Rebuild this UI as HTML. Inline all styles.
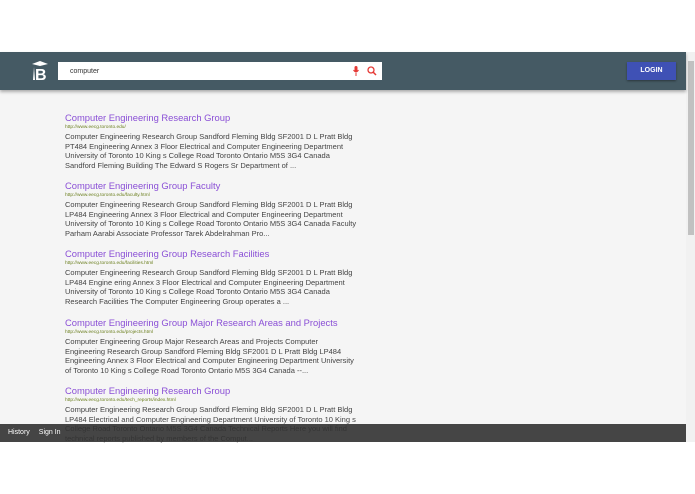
<!DOCTYPE html>
<html><head><style>
*{margin:0;padding:0;box-sizing:border-box}
body{width:695px;height:494px;background:#fff;position:relative;overflow:hidden;font-family:"Liberation Sans",Arial,sans-serif}
.hdr{position:absolute;left:0;top:52px;width:686px;height:38px;background:#455a64;box-shadow:0 2px 3px rgba(0,0,0,.3);z-index:2}
.main{position:absolute;left:0;top:90px;width:686px;height:352px;background:#f5f5f5}
.sb{position:absolute;left:686px;top:52px;width:9px;height:390px;background:#f1f1f1}
.thumb{position:absolute;left:688px;top:61px;width:6px;height:174px;background:#c1c1c1}
.search{position:absolute;left:58px;top:62px;width:324px;height:18px;background:#fff;font-size:7px;color:#333;padding:6px 0 0 12px;z-index:3}
.login{position:absolute;left:627px;top:62px;width:49px;height:18px;background:#3f51b5;color:#fff;font-size:7px;font-weight:bold;text-align:center;line-height:18px;box-shadow:0 1px 2px rgba(0,0,0,.4);z-index:3}
.res{position:absolute;left:65px;width:300px}
.t{color:#8a4fd6;font-size:9.4px;line-height:12px;white-space:nowrap}
.u{color:#6b7f1e;font-size:4.8px;line-height:8px;white-space:nowrap}
.s{color:#444;font-size:7.5px;line-height:9.5px;width:292px}
.bot{position:absolute;left:0;top:424px;width:686px;height:18px;background:rgba(50,50,50,.9);color:#fff;font-size:7px;line-height:18px;padding-left:8px}
.bot span{margin-right:9px}
</style></head><body>
<div class="main"></div>
<div class="hdr">
<svg style="position:absolute;left:31px;top:8px" width="18" height="22" viewBox="0 0 18 22"><path d="M1 4 L9 1 L17 4 L9 6 Z" fill="#fff"/><text x="4" y="20" font-family="Liberation Sans" font-weight="bold" font-size="16" fill="#fff">B</text><path d="M3 7 L4 20 L2 20 Z" fill="#fff"/></svg>
</div>
<div class="search">computer
<svg style="position:absolute;left:295px;top:4px" width="6" height="10" viewBox="0 0 6 10"><rect x="1.5" y="0" width="3" height="6" rx="1.5" fill="#e53935"/><path d="M0.5 4 Q3 8 5.5 4 M3 7 V10" stroke="#e53935" fill="none"/></svg>
<svg style="position:absolute;left:309px;top:4px" width="10" height="10" viewBox="0 0 10 10"><circle cx="4" cy="4" r="3" stroke="#e53935" stroke-width="1.3" fill="none"/><path d="M6 6 L9 9" stroke="#e53935" stroke-width="1.5"/></svg>
</div>
<div class="login">LOGIN</div>
<div class="res" style="top:112px"><div class="t">Computer Engineering Research Group</div><div class="u">http://www.eecg.toronto.edu/</div><div class="s">Computer Engineering Research Group Sandford Fleming Bldg SF2001 D L Pratt Bldg PT484 Engineering Annex 3 Floor Electrical and Computer Engineering Department University of Toronto 10 King s College Road Toronto Ontario M5S 3G4 Canada Sandford Fleming Building The Edward S Rogers Sr Department of ...</div></div>
<div class="res" style="top:180px"><div class="t">Computer Engineering Group Faculty</div><div class="u">http://www.eecg.toronto.edu/faculty.html</div><div class="s">Computer Engineering Research Group Sandford Fleming Bldg SF2001 D L Pratt Bldg LP484 Engineering Annex 3 Floor Electrical and Computer Engineering Department University of Toronto 10 King s College Road Toronto Ontario M5S 3G4 Canada Faculty Parham Aarabi Associate Professor Tarek Abdelrahman Pro...</div></div>
<div class="res" style="top:248px"><div class="t">Computer Engineering Group Research Facilities</div><div class="u">http://www.eecg.toronto.edu/facilities.html</div><div class="s">Computer Engineering Research Group Sandford Fleming Bldg SF2001 D L Pratt Bldg LP484 Engine ering Annex 3 Floor Electrical and Computer Engineering Department University of Toronto 10 King s College Road Toronto Ontario M5S 3G4 Canada Research Facilities The Computer Engineering Group operates a ...</div></div>
<div class="res" style="top:317px"><div class="t">Computer Engineering Group Major Research Areas and Projects</div><div class="u">http://www.eecg.toronto.edu/projects.html</div><div class="s">Computer Engineering Group Major Research Areas and Projects Computer Engineering Research Group Sandford Fleming Bldg SF2001 D L Pratt Bldg LP484 Engineering Annex 3 Floor Electrical and Computer Engineering Department University of Toronto 10 King s College Road Toronto Ontario M5S 3G4 Canada --...</div></div>
<div class="res" style="top:385px"><div class="t">Computer Engineering Research Group</div><div class="u">http://www.eecg.toronto.edu/tech_reports/index.html</div><div class="s">Computer Engineering Research Group Sandford Fleming Bldg SF2001 D L Pratt Bldg LP484 Electrical and Computer Engineering Department University of Toronto 10 King s College Road Toronto Ontario M5S 3G4 Canada Technical Reports Here you will find technical reports published by members of the Comput...</div></div>
<div class="bot"><span>History</span><span>Sign In</span></div>
<div class="sb"></div><div class="thumb"></div>
</body></html>
